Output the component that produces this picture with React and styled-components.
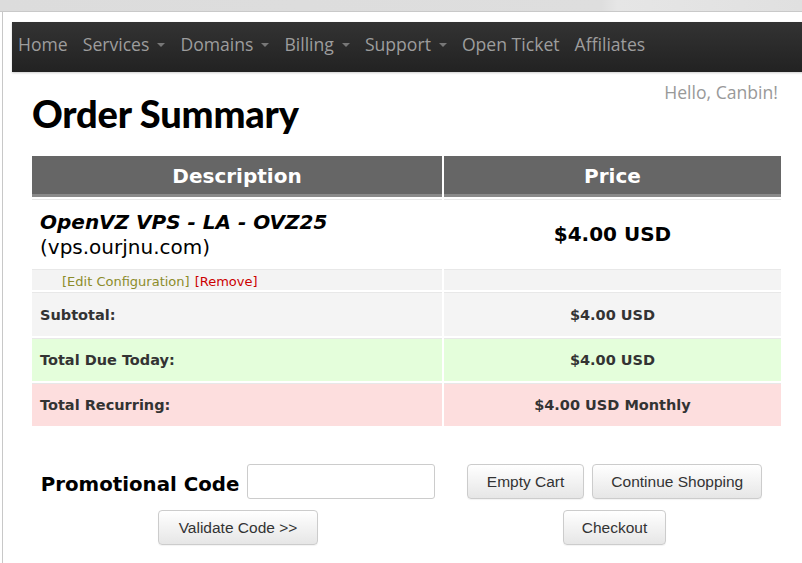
import React from "react";
import styled, { createGlobalStyle } from "styled-components";

const Global = createGlobalStyle`
  html, body { margin: 0; padding: 0; background: #fff; }
  body { font-family: "DejaVu Sans", Verdana, sans-serif; overflow: hidden; }
`;

const TopBand = styled.div`
  height: 11px;
  background: linear-gradient(90deg, #dcdcdc 0%, #dedede 75%, #e6e6e6 77%, #e0e0e0 100%);
  border-bottom: 1px solid #c9c9c9;
`;

const Frame = styled.div`
  margin-left: 2px;
  border-left: 1px solid #c8c8c8;
  padding: 10px 0 0 9px;
  min-height: 551px;
  box-sizing: border-box;
`;

const NavBar = styled.nav`
  height: 50px;
  box-sizing: border-box;
  margin-right: -20px;
  background: linear-gradient(#333 0%, #222 100%);
  display: flex;
  align-items: center;
  padding: 0 0 6px 6px;
  box-shadow: 0 1px 2px rgba(0,0,0,0.2);
`;

const NavItem = styled.span`
  font-family: "Open Sans", sans-serif;
  font-size: 17.6px;
  color: #9d9d9d;
  display: inline-flex;
  align-items: center;
  margin-right: 15px;
`;

const Caret = styled.span`
  display: inline-block;
  width: 0;
  height: 0;
  border-left: 4px solid transparent;
  border-right: 4px solid transparent;
  border-top: 4px solid #777;
  margin-left: 8px;
  margin-top: 2px;
`;

const Content = styled.div`
  padding: 0 24px 0 20px;
`;

const Hello = styled.div`
  font-family: "Open Sans", sans-serif;
  font-size: 17.6px;
  color: #999;
  text-align: right;
  margin-top: 8px;
  height: 13px;
  line-height: 24px;
`;

const Title = styled.h1`
  font-family: Lato, sans-serif;
  font-weight: 900;
  font-size: 38px;
  letter-spacing: -0.2px;
  color: #000;
  margin: 0;
  line-height: 40px;
  height: 61px;
`;

const Table = styled.table`
  width: 753px;
  margin-left: -2px;
  border-spacing: 2px;
  border-collapse: separate;
  table-layout: fixed;
`;

const Th = styled.th`
  background: #666;
  color: #fff;
  font-size: 20px;
  font-weight: bold;
  height: 41px;
  box-sizing: border-box;
  padding: 2px 0 0 0;
  border-bottom: 3px solid #8a8a8a;
`;

const Td = styled.td`
  background: ${p => p.$bg || "#fff"};
  text-align: ${p => (p.$center ? "center" : "left")};
  padding: ${p => (p.$center ? "0" : "0 0 0 8px")};
  height: ${p => p.$h || 42}px;
  border-top: 1px solid #e8e8e8;
  vertical-align: middle;
  color: #333;
  font-weight: bold;
  font-size: 14.5px;
`;

const ProductName = styled.div`
  font-weight: bold;
  font-style: italic;
  font-size: 20px;
  color: #000;
  line-height: 25px;
  padding-top: 3px;
`;

const Domain = styled.div`
  font-weight: normal;
  font-size: 20px;
  color: #000;
  line-height: 25px;
`;

const BigPrice = styled.span`
  font-size: 20px;
  color: #000;
  font-weight: bold;
`;

const SmallLink = styled.span`
  font-size: 13px;
  font-weight: normal;
  color: ${p => (p.$red ? "#cc0000" : "#8c8c2a")};
`;

const Links = styled.div`
  padding-left: 22px;
  padding-top: 2px;
`;

const Bottom = styled.div`
  display: grid;
  grid-template-columns: 412px 337px;
  gap: 2px;
  margin-top: 36px;
`;

const Col = styled.div`
  display: flex;
  flex-direction: column;
  align-items: center;
  gap: 11px;
`;

const Row = styled.div`
  display: flex;
  align-items: center;
  gap: 8px;
`;

const PromoLabel = styled.label`
  font-weight: bold;
  font-size: 19.8px;
  color: #000;
  margin-top: 5px;
`;

const Input = styled.input`
  width: 188px;
  height: 35px;
  box-sizing: border-box;
  border: 1px solid #ccc;
  border-radius: 3px;
  background: #fff;
`;

const Button = styled.button`
  font-family: "Liberation Sans", Arial, sans-serif;
  font-size: 15.5px;
  color: #333;
  height: 35px;
  padding: 0 ${p => p.$px || 19}px;
  background: linear-gradient(#fff 0%, #e6e6e6 100%);
  border: 1px solid #ccc;
  border-radius: 4px;
  box-shadow: 0 1px 1px rgba(0,0,0,0.05);
`;

export default function App() {
  return (
    <>
      <Global />
      <TopBand />
      <Frame>
        <NavBar>
          <NavItem>Home</NavItem>
          <NavItem>Services<Caret /></NavItem>
          <NavItem>Domains<Caret /></NavItem>
          <NavItem>Billing<Caret /></NavItem>
          <NavItem>Support<Caret /></NavItem>
          <NavItem>Open Ticket</NavItem>
          <NavItem>Affiliates</NavItem>
        </NavBar>
        <Content>
          <Hello>Hello, Canbin!</Hello>
          <Title>Order Summary</Title>
          <Table>
            <thead>
              <tr>
                <Th style={{ width: "410px" }}>Description</Th>
                <Th>Price</Th>
              </tr>
            </thead>
            <tbody>
              <tr>
                <Td $h={67}>
                  <ProductName>OpenVZ VPS - LA - OVZ25</ProductName>
                  <Domain>(vps.ourjnu.com)</Domain>
                </Td>
                <Td $center $h={67}><BigPrice>$4.00 USD</BigPrice></Td>
              </tr>
              <tr>
                <Td $bg="#f3f3f3" $h={20}>
                  <Links>
                    <SmallLink>[Edit Configuration]</SmallLink>{" "}
                    <SmallLink $red>[Remove]</SmallLink>
                  </Links>
                </Td>
                <Td $bg="#f3f3f3" $h={20} $center />
              </tr>
              <tr>
                <Td $bg="#f4f4f4" $h={43}>Subtotal:</Td>
                <Td $bg="#f4f4f4" $h={43} $center>$4.00 USD</Td>
              </tr>
              <tr>
                <Td $bg="#e4fedb">Total Due Today:</Td>
                <Td $bg="#e4fedb" $center>$4.00 USD</Td>
              </tr>
              <tr>
                <Td $bg="#fddede">Total Recurring:</Td>
                <Td $bg="#fddede" $center>$4.00 USD Monthly</Td>
              </tr>
            </tbody>
          </Table>
          <Bottom>
            <Col>
              <Row>
                <PromoLabel>Promotional Code</PromoLabel>
                <Input type="text" />
              </Row>
              <Button $px={20}>Validate Code &gt;&gt;</Button>
            </Col>
            <Col>
              <Row>
                <Button>Empty Cart</Button>
                <Button $px={18}>Continue Shopping</Button>
              </Row>
              <Button $px={18}>Checkout</Button>
            </Col>
          </Bottom>
        </Content>
      </Frame>
    </>
  );
}
